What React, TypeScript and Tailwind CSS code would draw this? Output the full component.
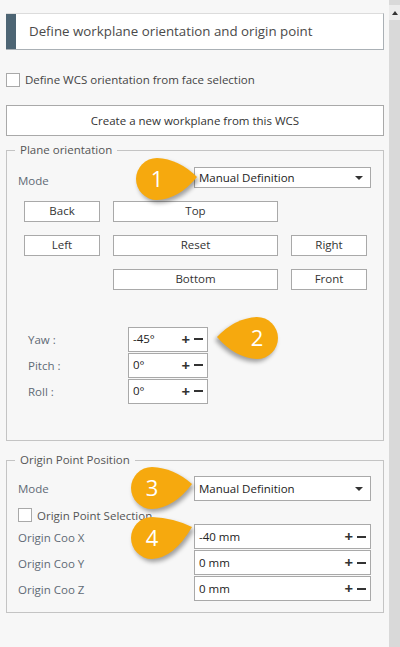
import React from 'react';

const font = { fontFamily: '"Open Sans", "Noto Sans", sans-serif' };

type CalloutProps = { n: string; left: number; top: number; flip?: boolean; tipY?: number };

// orange teardrop marker; circle r=21 at (30,28) inside a 76x60 box
const Callout: React.FC<CalloutProps> = ({ n, left, top, flip = false, tipY = -2 }) => (
  <div className="absolute pointer-events-none" style={{ left, top, width: 76, height: 60 }}>
    <svg
      width="76"
      height="60"
      viewBox="0 0 76 60"
      className="drop-shadow-[2px_3px_2px_rgba(0,0,0,0.35)]"
      style={{ transform: flip ? 'scaleX(-1)' : undefined }}
    >
      <path
        d={`M ${30 + 40} ${28 + tipY} Q ${30 + 22} ${28 - 20} 30 7 A 21 21 0 1 0 30 49 Q ${30 + 22} ${28 + 20} ${30 + 40} ${28 + tipY} Z`}
        fill="#f6a90e"
      />
    </svg>
    <span
      className="absolute text-white text-[22px] leading-none"
      style={{ left: flip ? 46 - 7 : 30 - 7, top: 16, width: 14, textAlign: 'center', ...font }}
    >
      {n}
    </span>
  </div>
);

const ViewButton: React.FC<{ label: string }> = ({ label }) => (
  <button className="h-[21px] bg-white border border-[#a9a9a9] text-[11.5px] text-[#333] leading-none">
    {label}
  </button>
);

const Select: React.FC<{ h: number }> = ({ h }) => (
  <div
    className="w-[177px] bg-white border border-[#a9a9a9] flex items-center justify-between pl-[4px] pr-[7px] text-[11.5px] text-[#222]"
    style={{ height: h }}
  >
    <span>Manual Definition</span>
    <span className="w-0 h-0 border-l-[4px] border-r-[4px] border-t-[4px] border-l-transparent border-r-transparent border-t-[#333]" />
  </div>
);

const Spin: React.FC<{ value: string; w: string }> = ({ value, w }) => (
  <div className={`${w} h-[25px] bg-white border border-[#a9a9a9] flex items-center justify-between pl-[4px] pr-[4px] text-[11.5px] text-[#222] mb-[1px]`}>
    <span>{value}</span>
    <span className="flex items-center gap-[4px] text-[#333] font-bold text-[15px] leading-none">
      <span>+</span>
      <span className="inline-block w-[9px] h-[2px] bg-[#333]" />
    </span>
  </div>
);

export default function App() {
  return (
    <div className="w-[400px] h-[647px] bg-[#f7f7f7] flex overflow-hidden relative" style={font}>
      <div className="flex-1 flex flex-col pl-[6px] pr-[5px]">
        {/* header */}
        <div className="mt-[13px] h-[37px] flex bg-white border-r border-b border-t border-t-[#dcdcdc] border-r-[#aab0b5] border-b-[#aab0b5]">
          <div className="w-[10px] bg-[#4d6574]" />
          <div className="flex items-center pl-[13px] text-[13.3px] text-[#4a4a4a]">
            Define workplane orientation and origin point
          </div>
        </div>

        {/* face selection */}
        <label className="mt-[21px] flex items-center gap-[5px] text-[11.5px] text-[#444]">
          <span className="w-[14px] h-[14px] bg-white border border-[#a9a9a9]" />
          Define WCS orientation from face selection
        </label>

        <button className="mt-[17px] h-[31px] bg-white border border-[#a9a9a9] text-[11.5px] text-[#333]">
          Create a new workplane from this WCS
        </button>

        {/* plane orientation */}
        <fieldset className="mt-[5px] h-[300px] border border-[#c4c4c4] px-0">
          <legend className="ml-[8px] px-[5px] text-[11.5px] text-[#555] leading-[18px]">Plane orientation</legend>
          <div className="flex items-center justify-between pl-[11px] pr-[12px] mt-[7px]">
            <span className="text-[11.5px] text-[#5f6a75] pt-[6px]">Mode</span>
            <Select h={21} />
          </div>
          <div className="grid grid-cols-[76px_165px_76px] gap-x-[13px] gap-y-[13px] ml-[17px] mt-[11px]">
            <ViewButton label="Back" />
            <ViewButton label="Top" />
            <div />
            <ViewButton label="Left" />
            <ViewButton label="Reset" />
            <ViewButton label="Right" />
            <div />
            <ViewButton label="Bottom" />
            <ViewButton label="Front" />
          </div>
          <div className="mt-[37px] flex flex-col">
            {[
              ['Yaw :', '-45°'],
              ['Pitch :', '0°'],
              ['Roll :', '0°'],
            ].map(([l, v]) => (
              <div key={l} className="flex items-center">
                <span className="w-[121px] pl-[21px] text-[11.5px] text-[#5f6a75]">{l}</span>
                <Spin value={v} w="w-[80px]" />
              </div>
            ))}
          </div>
        </fieldset>

        {/* origin point */}
        <fieldset className="mt-[10px] h-[162px] border border-[#c4c4c4] px-0">
          <legend className="ml-[8px] px-[5px] text-[11.5px] text-[#555] leading-[18px]">Origin Point Position</legend>
          <div className="flex items-center justify-between pl-[11px] pr-[12px] mt-[7px]">
            <span className="text-[11.5px] text-[#5f6a75]">Mode</span>
            <Select h={25} />
          </div>
          <label className="ml-[11px] mt-[7px] flex items-center gap-[5px] text-[11.5px] text-[#555] h-[14px]">
            <span className="w-[14px] h-[14px] bg-white border border-[#a9a9a9]" />
            Origin Point Selection
          </label>
          <div className="mt-[2px] flex flex-col">
            {[
              ['Origin Coo X', '-40 mm'],
              ['Origin Coo Y', '0 mm'],
              ['Origin Coo Z', '0 mm'],
            ].map(([l, v]) => (
              <div key={l} className="flex items-center justify-between pl-[11px] pr-[12px]">
                <span className="text-[11.5px] text-[#5f6a75]">{l}</span>
                <Spin value={v} w="w-[177px]" />
              </div>
            ))}
          </div>
        </fieldset>
      </div>

      {/* scrollbar */}
      <div className="w-[11px] h-full bg-[#d9d9d9] flex flex-col">
        <div className="mt-[5px] h-[15px] bg-[#ececec] flex items-center justify-center">
          <span className="w-0 h-0 border-l-[3px] border-r-[3px] border-b-[4px] border-l-transparent border-r-transparent border-b-[#333]" />
        </div>
      </div>

      <Callout n="1" left={127} top={151} />
      <Callout n="2" left={211} top={310} flip tipY={-1} />
      <Callout n="3" left={122} top={460} tipY={-4} />
      <Callout n="4" left={122} top={510} tipY={-11} />
    </div>
  );
}
